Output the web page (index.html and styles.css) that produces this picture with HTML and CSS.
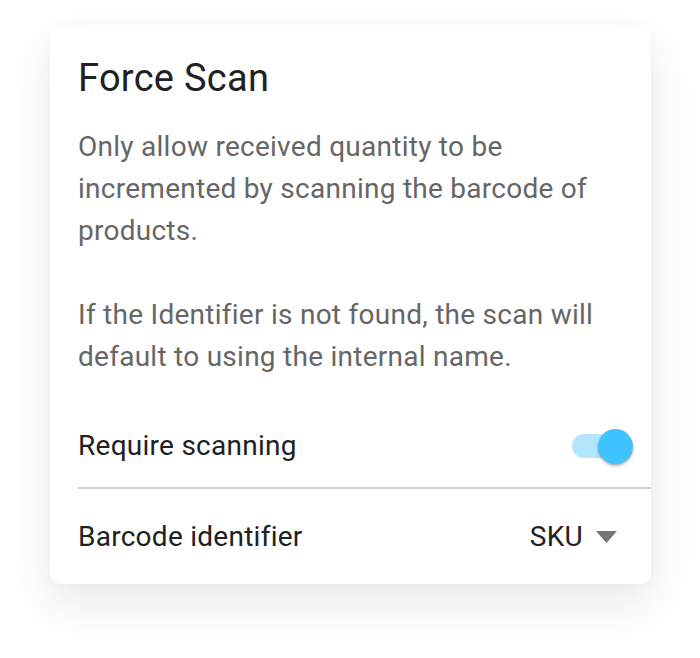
FILE: index.html
```html
<!DOCTYPE html>
<html lang="en">
<head>
  <meta charset="UTF-8">
  <title>Force Scan</title>
  <link rel="stylesheet" href="styles.css">
</head>
<body>
  <div class="page">
    <div class="card">
      <h2 class="title">Force Scan</h2>
      <div class="desc">
        <p>Only allow received quantity to be incremented by scanning the barcode of products.</p>
        <p>If the Identifier is not found, the scan will default to using the internal name.</p>
      </div>

      <div class="row row-switch">
        <span class="label">Require scanning</span>
        <span class="switch">
          <span class="track"></span>
          <span class="thumb"></span>
        </span>
      </div>
      <div class="divider"></div>
      <div class="row row-select">
        <span class="label">Barcode identifier</span>
        <span class="select">
          SKU
          <svg class="caret" width="21" height="12" viewBox="0 0 21 12"><path d="M0 0h21L10.5 12z" fill="#757575"/></svg>
        </span>
      </div>
    </div>
  </div>
</body>
</html>
```

FILE: styles.css
```css
body { margin: 0; background: #fff; font-family: Roboto, "Noto Sans", sans-serif; }
.page { padding: 25px 49px 74px 50px; }
.card { width: 601px; height: 559px; box-sizing: border-box; padding: 30px 0 0 28px; background: #fff; border-radius: 10px; box-shadow: 0 20px 50px rgba(0,0,0,0.085), 0 2px 8px rgba(0,0,0,0.035); }
.title { margin: 0; font-size: 38px; line-height: 46px; font-weight: 400; letter-spacing: 0.0075em; color: #212121; }
.desc { margin-top: 25px; padding-right: 28px; font-size: 28px; line-height: 42px; letter-spacing: 0.00938em; color: #666; }
.desc p { margin: 0; }
.desc p + p { margin-top: 42px; }

.row { display: flex; align-items: center; justify-content: space-between; font-size: 28px; line-height: 42px; letter-spacing: 0.00938em; color: #212121; }
.row-switch { height: 82px; margin-top: 27px; padding-right: 18px; }
.row-select { height: 96px; padding-right: 34px; }
.divider { height: 2px; background: #cfcfcf; }

/* switch: track with the thumb sitting on its right end */
.switch { position: relative; width: 61px; height: 35px; }
.track { position: absolute; left: 0; top: 5px; width: 60px; height: 24px; border-radius: 12px; background: #b3e5fc; }
.thumb { position: absolute; right: 0; top: 0; width: 35px; height: 35px; border-radius: 50%; background: #40c4ff; box-shadow: 0 2px 3px rgba(0,0,0,0.25), 0 1px 1px rgba(0,0,0,0.12); }

.select { display: flex; align-items: center; gap: 13px; }
.caret { display: block; }
```
